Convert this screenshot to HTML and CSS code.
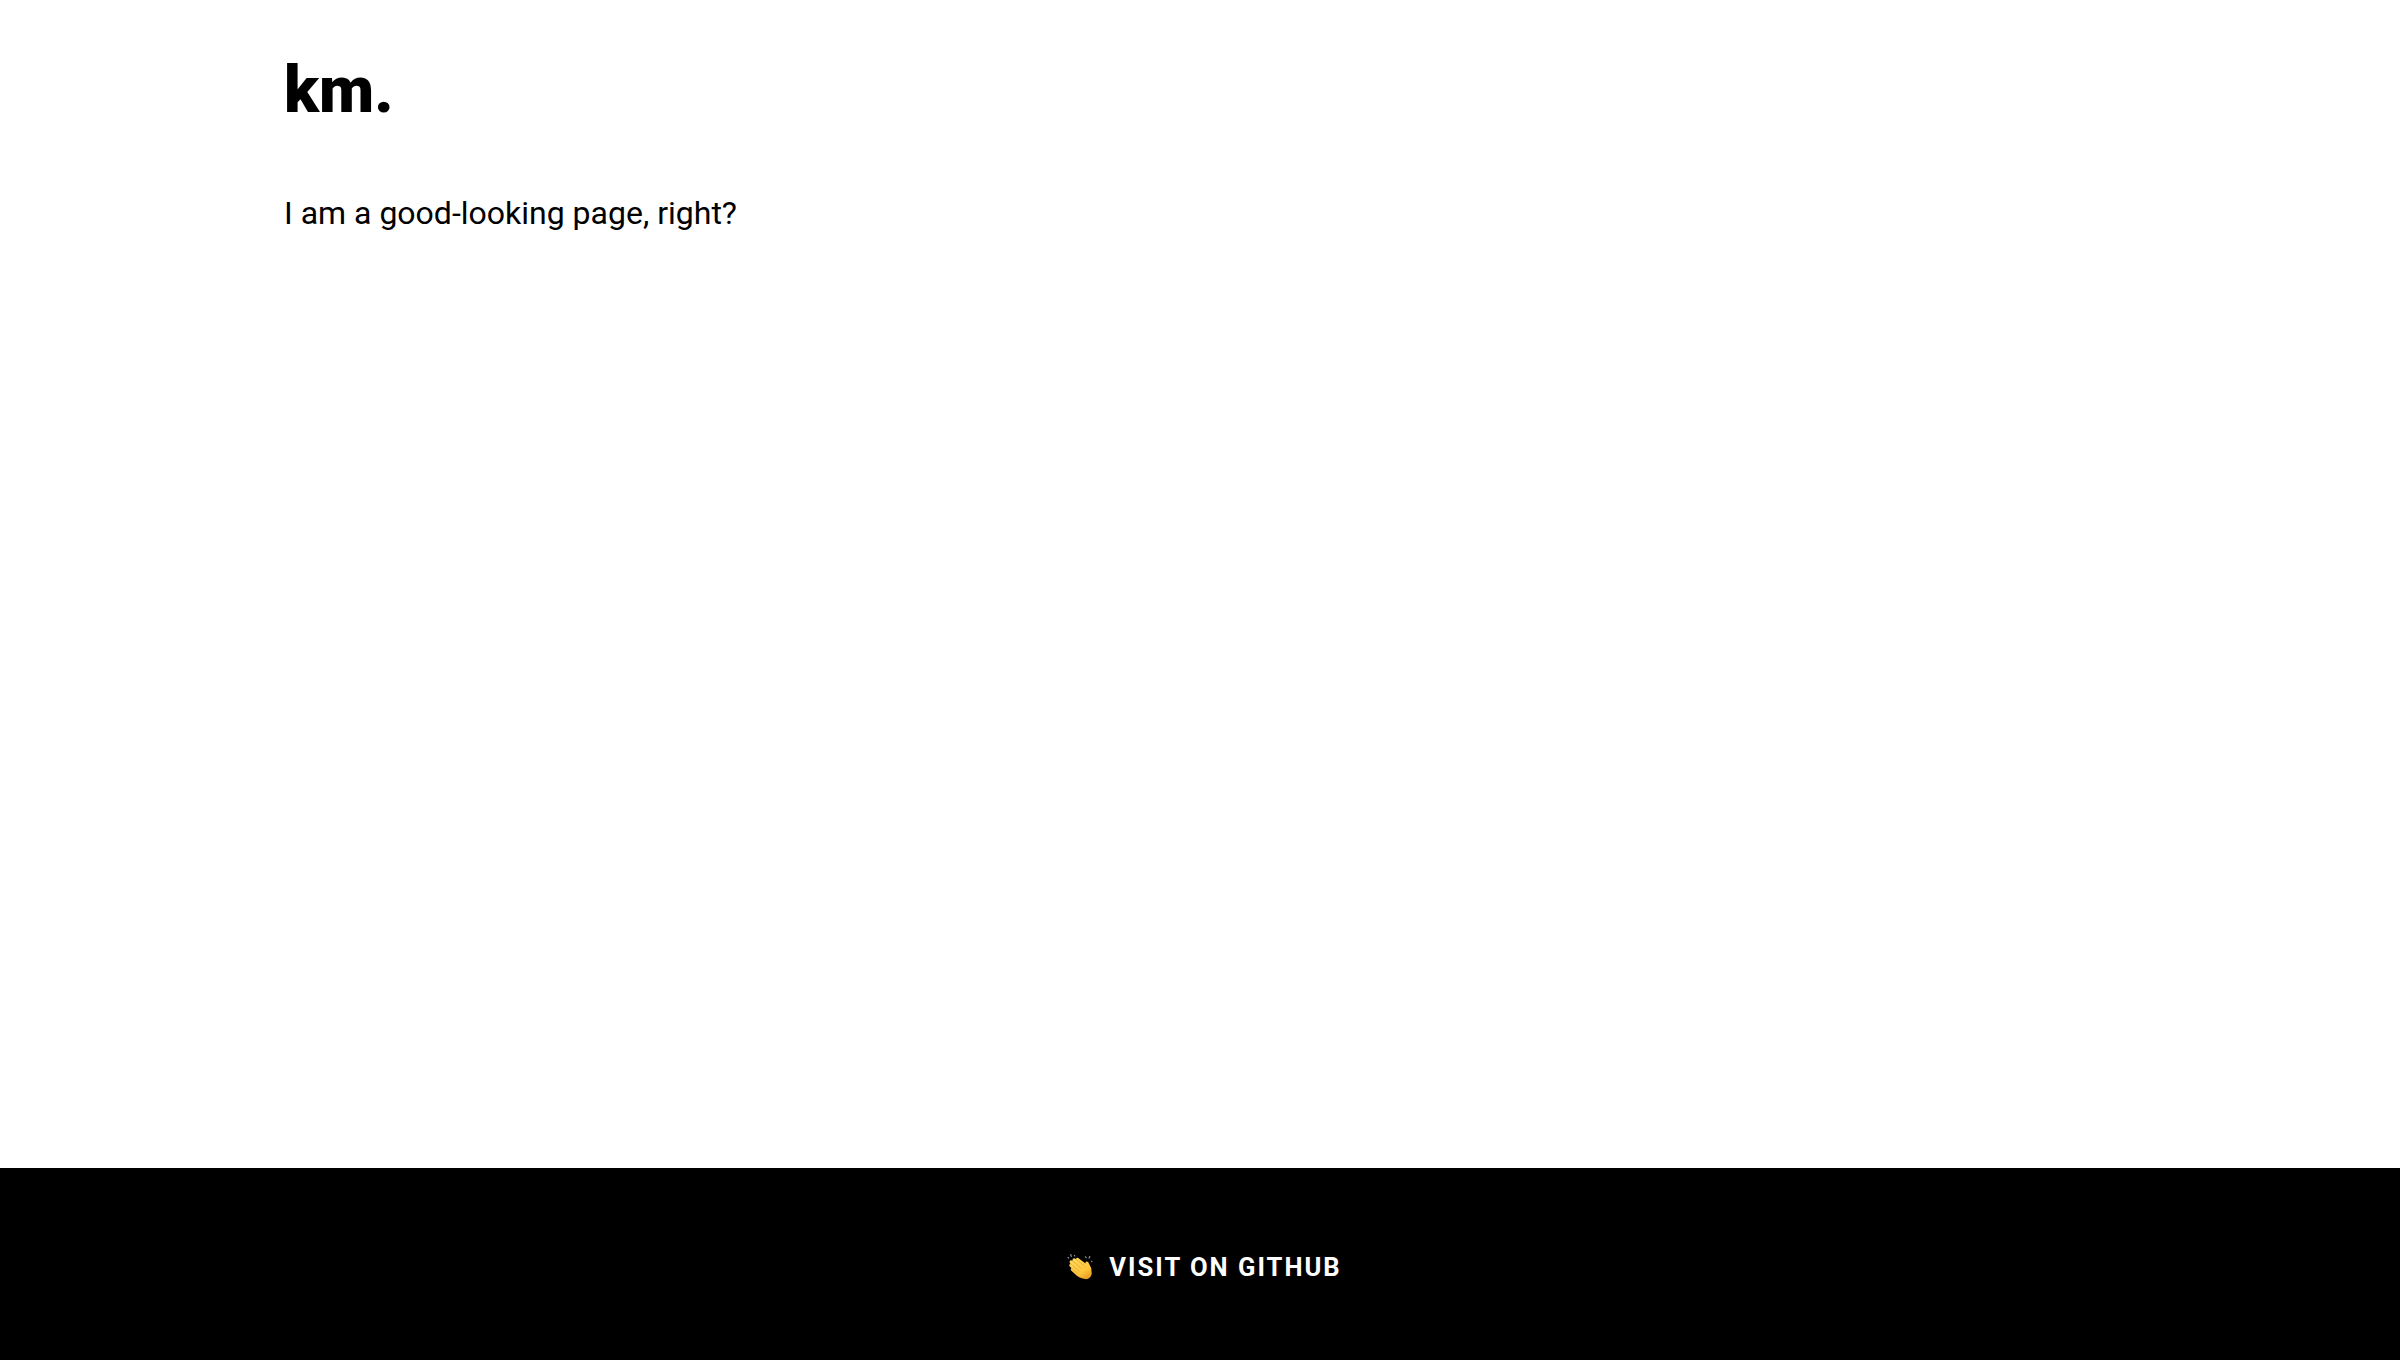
FILE: index.html
```html
<!DOCTYPE html>
<html lang="en">
<head>
<meta charset="utf-8">
<title>km.</title>
<link rel="stylesheet" href="styles.css">
</head>
<body>
<main class="page">
  <h1 class="logo">km.</h1>
  <p class="lead">I am a good-looking page, right?</p>
</main>
<footer class="footer">
  <a class="link">
    <svg class="clap" viewBox="0 0 26 28" aria-hidden="true">
      <defs>
        <linearGradient id="skin" x1="0" y1="0" x2="0.6" y2="1">
          <stop offset="0" stop-color="#ffdc5e"/>
          <stop offset="0.75" stop-color="#fdc53c"/>
          <stop offset="1" stop-color="#eba426"/>
        </linearGradient>
      </defs>
      <path fill="url(#skin)" d="M2.6 9.2Q2.3 7.5 4 7.3L5.5 7.8Q5.2 5.4 7 5.2L9 6Q9.5 4.4 11.2 4.9L18.5 10.6L18.4 9.4Q19.8 7.6 21.3 9.2L24.2 15L24.8 20.7Q23.6 25.4 19.5 26.2Q13.5 26 9.6 22.6L4.4 17.7Q2.9 16 4.5 15.2L2.6 13.2Q1.5 11.5 3.4 11Z"/>
      <path fill="none" stroke="#d99423" stroke-width="0.5" stroke-linecap="round" d="M5.5 7.9L14 15M4 11L12 18M4.5 15.3L10.5 20.2M9 6.1L17.5 13"/>
      <path fill="none" stroke="#98a4aa" stroke-width="1.1" stroke-linecap="round" d="M1 4.5L1.7 5M3.7 1.5L4.3 3.4M7.5 2.4L7.8 3M18.5 3.8L19.2 4.8M22.8 3.4L22 5M24.5 8.2L25 8.4"/>
    </svg>
    <span class="label">Visit on GitHub</span>
  </a>
</footer>
</body>
</html>
```
FILE: styles.css
```css
* { box-sizing: border-box; }
body {
  margin: 0;
  min-height: 100vh;
  display: flex;
  flex-direction: column;
  background: #fff;
  color: #000;
  font-family: Roboto, sans-serif;
}
.page {
  flex: 1;
  padding: 51px 284px 0;
}
.logo {
  margin: 0;
  font-size: 64px;
  line-height: 80px;
  font-weight: 900;
}
.lead {
  margin: 58px 0 0;
  font-size: 32px;
  line-height: 48px;
}
.footer {
  height: 192px;
  background: #000;
  display: flex;
  align-items: center;
  justify-content: center;
  padding: 6px 0 0 9px;
}
.link {
  display: flex;
  align-items: center;
  gap: 16px;
  color: #fff;
  font-size: 25.6px;
  line-height: 32px;
  font-weight: 700;
  letter-spacing: 2px;
  text-transform: uppercase;
}
.clap {
  width: 26px;
  height: 28px;
}
```
